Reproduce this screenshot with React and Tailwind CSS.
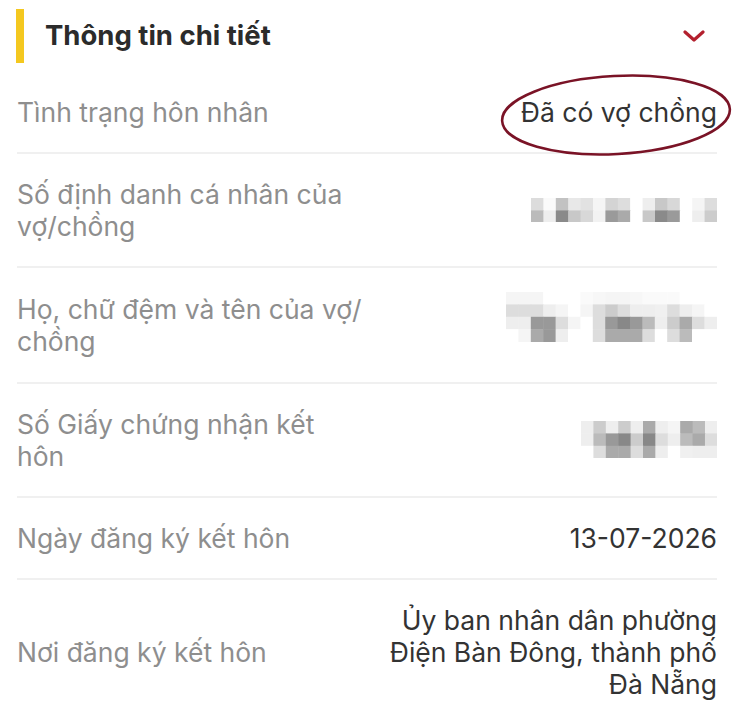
// App.jsx
import React from "react";

// Ô mờ (pixel hoá) thay cho dữ liệu cá nhân bị che
const BLUR_ID = [
  ["#dcdcdc", "#fafafa", "#c2c2c2", "#e8e8e8", "#e2e2e2", "#f5f5f5", "#d4d4d4", "#dddddd", "#ffffff", "#eeeeee", "#c8c8c8", "#d8d8d8", "#ffffff", "#f5f5f5", "#dddddd"],
  ["#bbbbbb", "#eeeeee", "#8a8a8a", "#c8c8c8", "#d8d8d8", "#f2f2f2", "#9a9a9a", "#aaaaaa", "#ffffff", "#c8c8c8", "#8a8a8a", "#9a9a9a", "#ffffff", "#eeeeee", "#cccccc"],
];

const BLUR_NAME = [
  ["#f5f5f5", "#f5f5f5", "#f5f5f5", "#ffffff", "#ffffff", "#ffffff", "#fafafa", "#f7f7f7", "#f5f5f5", "#f5f5f5", "#f7f7f7", "#fafafa", "#fafafa", "#fafafa", "#ffffff", "#ffffff", "#ffffff"],
  ["#dddddd", "#dddddd", "#dddddd", "#eeeeee", "#f5f5f5", "#ffffff", "#f5f5f5", "#dddddd", "#cccccc", "#dddddd", "#eeeeee", "#eeeeee", "#f0f0f0", "#dddddd", "#eeeeee", "#f5f5f5", "#ffffff"],
  ["#eeeeee", "#eeeeee", "#999999", "#999999", "#dddddd", "#f5f5f5", "#ffffff", "#dddddd", "#999999", "#888888", "#999999", "#bbbbbb", "#eeeeee", "#cccccc", "#aaaaaa", "#dddddd", "#eeeeee"],
  ["#ffffff", "#f5f5f5", "#aaaaaa", "#999999", "#eeeeee", "#ffffff", "#ffffff", "#dddddd", "#aaaaaa", "#aaaaaa", "#aaaaaa", "#dddddd", "#ffffff", "#dddddd", "#bbbbbb", "#ffffff", "#ffffff"],
];

const BLUR_CERT = [
  ["#eeeeee", "#cccccc", "#eeeeee", "#cccccc", "#eeeeee", "#aaaaaa", "#eeeeee", "#f5f5f5", "#aaaaaa", "#bbbbbb", "#eeeeee"],
  ["#eeeeee", "#bbbbbb", "#999999", "#888888", "#cccccc", "#888888", "#dddddd", "#eeeeee", "#bbbbbb", "#aaaaaa", "#dddddd"],
  ["#ffffff", "#dddddd", "#aaaaaa", "#aaaaaa", "#dddddd", "#aaaaaa", "#eeeeee", "#ffffff", "#f0f0f0", "#eeeeee", "#eeeeee"],
];

const rows = [
  { label: ["Tình trạng hôn nhân"], value: ["Đã có vợ chồng"], circled: true },
  { label: ["Số định danh cá nhân của", "vợ/chồng"], blur: BLUR_ID },
  { label: ["Họ, chữ đệm và tên của vợ/", "chồng"], blur: BLUR_NAME, lift: true },
  { label: ["Số Giấy chứng nhận kết", "hôn"], blur: BLUR_CERT },
  { label: ["Ngày đăng ký kết hôn"], value: ["13-07-2026"] },
  {
    label: ["Nơi đăng ký kết hôn"],
    value: ["Ủy ban nhân dân phường", "Điện Bàn Đông, thành phố", "Đà Nẵng"],
    last: true,
  },
];

function Pixels({ grid, lift }) {
  const cell = 12.4;
  const w = grid[0].length * cell;
  const h = grid.length * cell;
  return (
    <svg width={w} height={h} viewBox={`0 0 ${w} ${h}`} className={"block " + (lift ? "mb-[16px]" : "")}>
      {grid.map((line, r) =>
        line.map((c, i) => (
          <rect key={`${r}-${i}`} x={i * cell} y={r * cell} width={cell + 0.5} height={cell + 0.5} fill={c} />
        ))
      )}
    </svg>
  );
}

function Row({ item }) {
  return (
    <div
      className={
        "flex items-center justify-between py-[24px] " +
        (item.last ? "" : "border-b-2 border-[#f0f0f0]")
      }
    >
      <div className="text-[26.5px] leading-[32px] text-[#8e8e8e] whitespace-nowrap">
        {item.label.map((l, i) => (
          <div key={i}>{l}</div>
        ))}
      </div>
      {item.blur ? (
        <Pixels grid={item.blur} lift={item.lift} />
      ) : (
        <div className="relative text-right text-[26.5px] leading-[32px] text-[#333333] whitespace-nowrap">
          {item.value.map((v, i) => (
            <div key={i}>{v}</div>
          ))}
          {item.circled && (
            <svg
              width="236"
              height="90"
              viewBox="0 0 236 90"
              className="absolute left-[-23px] top-[-26px] pointer-events-none"
            >
              <ellipse
                cx="118"
                cy="45"
                rx="114"
                ry="39"
                fill="none"
                stroke="#7a1326"
                strokeWidth="2.6"
                transform="rotate(-3 118 45)"
              />
            </svg>
          )}
        </div>
      )}
    </div>
  );
}

export default function App() {
  return (
    <div className="min-h-screen w-full bg-white font-['Inter',sans-serif]">
      {/* Tiêu đề mục */}
      <header className="flex items-center h-[72px] pl-[16px] pr-[35px]">
        <div className="w-[8px] h-[54px] bg-[#f4c81f]" />
        <h2 className="ml-[21px] flex-1 text-[27.5px] font-bold text-[#2b2b2b]">
          Thông tin chi tiết
        </h2>
        <svg width="22" height="12" viewBox="0 0 22 12" fill="none">
          <path d="M2 2 L11 10 L20 2" stroke="#b3202e" strokeWidth="3.2" strokeLinecap="round" strokeLinejoin="round" />
        </svg>
      </header>

      {/* Danh sách thông tin */}
      <div className="pl-[17px] pr-[23px]">
        {rows.map((item, idx) => (
          <Row key={idx} item={item} />
        ))}
      </div>
    </div>
  );
}
